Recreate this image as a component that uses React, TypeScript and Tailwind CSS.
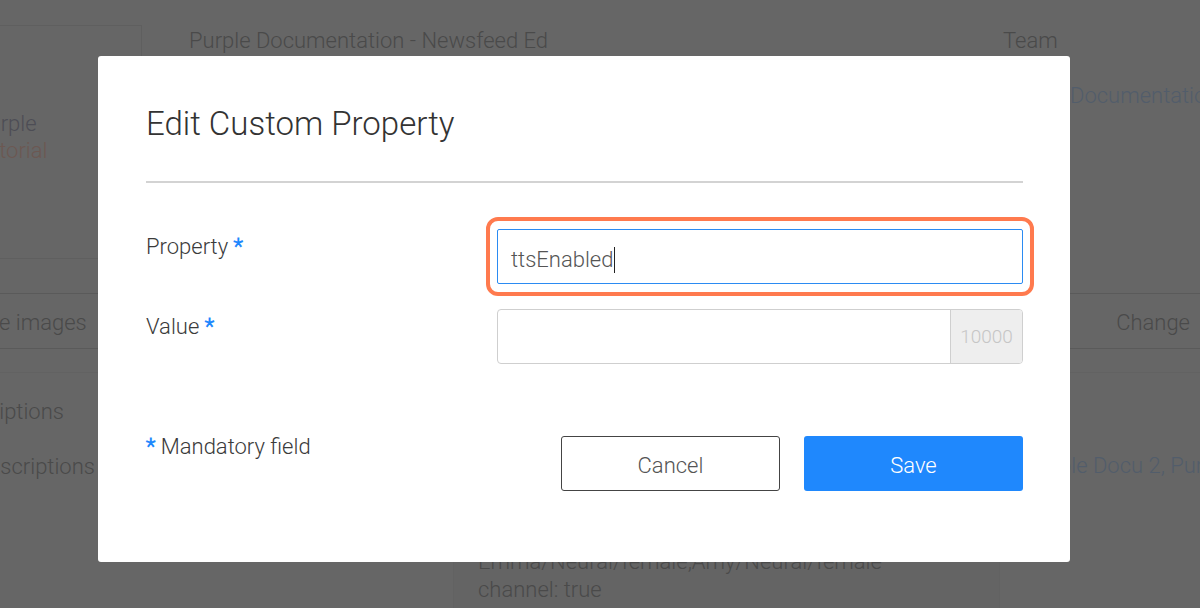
import React from 'react';

const Star = () => <span className="font-bold text-[#1e88fd]">*</span>;

export default function App() {
  return (
    <div className="relative h-[608px] w-[1200px] overflow-hidden whitespace-nowrap bg-[#666666] font-[family-name:'Roboto_Light',Roboto,sans-serif] text-[22px] font-light leading-[26px] text-[#4a4a4a]">
      {/* page behind the dialog */}
      <div className="flex h-[293px]">
        <div className="mt-[25px] ml-[-40px] h-[234px] w-[182px] shrink-0 border border-[#5f5f5f] pl-[14px] pt-[84px] leading-[27px]">
          <div className="text-[#4d4d55]">Purple</div>
          <div className="text-[#6c5852]">Tutorial</div>
        </div>
        <div className="flex-1 pl-[47px]">
          <div className="mt-[28px] flex">
            <span className="w-[814px] shrink-0">Purple Documentation - Newsfeed Ed</span>
            <span>Team</span>
          </div>
          <div className="mt-[29px] ml-[881px] text-[#525d6b]">Documentation</div>
        </div>
      </div>

      <div className="flex h-[56px] items-center justify-between border-y border-[#5a5a5a] pt-[4px]">
        <span className="ml-[-53px]">Resize images</span>
        <span className="mr-[10px]">Change</span>
      </div>
      <div className="h-[24px] border-b border-[#626262]" />

      <div className="flex">
        <div className="w-[453px] shrink-0">
          <div className="mt-[26px] ml-[-68px] font-normal">Subscriptions</div>
          <div className="mt-[29px] ml-[-37px]">Subscriptions</div>
        </div>
        <div className="h-[240px] w-[547px] shrink-0 border-x border-[#626262] bg-[#646464] pl-[24px] pt-[175px] leading-[28px]">
          <div>Emma/Neural/female,Amy/Neural/female</div>
          <div>channel: true</div>
        </div>
        <div className="pl-[26px] pt-[80px] text-[#525d6b]">Purple Docu 2, Purple Docu 3</div>
      </div>

      {/* dialog */}
      <div className="absolute inset-0 pl-[98px] pt-[56px]">
        <div className="h-[506px] w-[972px] rounded-[3px] bg-white pl-[48px] pr-[47px] pt-[49px] text-[#3b3b3b]">
          <h2 className="text-[33px] leading-[38px] font-light text-[#333]">Edit Custom Property</h2>
          <div className="mt-[38px] h-[2px] bg-[#d3d3d3]" />

          <div className="mt-[46px] flex">
            <div className="w-[351px] shrink-0 pt-[5px]">
              Property <Star />
            </div>
            <div className="relative h-[55px] w-[526px]">
              <div className="absolute -inset-x-[11px] -inset-y-[12px] rounded-[12px] border-4 border-[#ff7a4e]" />
              <div className="flex h-full items-center rounded-[2px] border border-[#2b8bf2] pl-[13px] pt-[7px] text-[#555]">
                <span>ttsEnabled</span>
                <span className="ml-px inline-block h-[26px] w-px bg-[#222]" />
              </div>
            </div>
          </div>

          <div className="mt-[25px] flex">
            <div className="w-[351px] shrink-0 pt-[5px]">
              Value <Star />
            </div>
            <div className="flex h-[55px] w-[526px] overflow-hidden rounded-[4px] border border-[#cfcfcf]">
              <div className="flex-1" />
              <div className="flex w-[72px] items-center justify-center border-l border-[#cfcfcf] bg-[#eeeeee] text-[19px] text-[#c6c6c6]">
                10000
              </div>
            </div>
          </div>

          <div className="mt-[72px] flex items-start">
            <div className="-mt-[2px] w-[415px] shrink-0">
              <Star /> Mandatory field
            </div>
            <button className="h-[55px] w-[219px] rounded-[3px] border-[1.5px] border-[#444] bg-white pt-[5px] text-[22px] font-light text-[#555]">
              Cancel
            </button>
            <button className="ml-[24px] h-[55px] w-[219px] rounded-[3px] bg-[#1f88fd] pt-[5px] text-[22px] font-light text-white">
              Save
            </button>
          </div>
        </div>
      </div>
    </div>
  );
}
